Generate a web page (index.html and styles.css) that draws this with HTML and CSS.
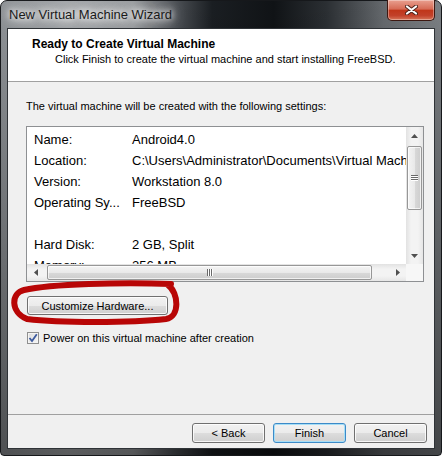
FILE: index.html
```html
<!DOCTYPE html>
<html lang="en">
<head>
    <meta charset="UTF-8">
    <meta name="viewport" content="width=device-width, initial-scale=1.0">
    <title>New Virtual Machine Wizard</title>
    <link rel="stylesheet" href="styles.css">
</head>
<body>
    <div class="window">
        <div class="titlebar">
            <span class="title">New Virtual Machine Wizard</span>
            <span class="close">
                <svg width="13" height="10" viewBox="0 0 13 10">
                    <path d="M2 1.5 L11 8.5 M11 1.5 L2 8.5" stroke="#4b2219" stroke-width="4" stroke-linecap="round"/>
                    <path d="M2 1.5 L11 8.5 M11 1.5 L2 8.5" stroke="#fff" stroke-width="2.2" stroke-linecap="round"/>
                </svg>
            </span>
        </div>

        <div class="client">
            <div class="header">
                <div class="head-title">Ready to Create Virtual Machine</div>
                <div class="head-sub">Click Finish to create the virtual machine and start installing FreeBSD.</div>
            </div>

            <div class="content">
                <p class="intro">The virtual machine will be created with the following settings:</p>

                <div class="listbox">
                    <div class="list-view">
                        <div class="row"><span class="key">Name:</span><span class="val">Android4.0</span></div>
                        <div class="row"><span class="key">Location:</span><span class="val">C:\Users\Administrator\Documents\Virtual Machines\Android4.0</span></div>
                        <div class="row"><span class="key">Version:</span><span class="val">Workstation 8.0</span></div>
                        <div class="row"><span class="key">Operating Sy...</span><span class="val">FreeBSD</span></div>
                        <div class="row"></div>
                        <div class="row"><span class="key">Hard Disk:</span><span class="val">2 GB, Split</span></div>
                        <div class="row"><span class="key">Memory:</span><span class="val">256 MB</span></div>
                    </div>
                    <div class="vscroll">
                        <div class="arrow">
                            <svg width="7" height="4" viewBox="0 0 7 4"><polygon points="0,4 3.5,0 7,4" fill="#505050"/></svg>
                        </div>
                        <div class="vthumb">
                            <svg width="7" height="6" viewBox="0 0 7 6">
                                <rect y="0" width="7" height="1" fill="#6a6a6a"/><rect y="1" width="7" height="1" fill="#fff"/>
                                <rect y="2" width="7" height="1" fill="#6a6a6a"/><rect y="3" width="7" height="1" fill="#fff"/>
                                <rect y="4" width="7" height="1" fill="#6a6a6a"/><rect y="5" width="7" height="1" fill="#fff"/>
                            </svg>
                        </div>
                        <div class="track"></div>
                        <div class="arrow">
                            <svg width="7" height="4" viewBox="0 0 7 4"><polygon points="0,0 7,0 3.5,4" fill="#505050"/></svg>
                        </div>
                    </div>
                    <div class="hscroll">
                        <div class="arrow">
                            <svg width="4" height="7" viewBox="0 0 4 7"><polygon points="4,0 4,7 0,3.5" fill="#505050"/></svg>
                        </div>
                        <div class="hthumb">
                            <svg width="6" height="7" viewBox="0 0 6 7">
                                <rect x="0" width="1" height="7" fill="#6a6a6a"/><rect x="1" width="1" height="7" fill="#fff"/>
                                <rect x="2" width="1" height="7" fill="#6a6a6a"/><rect x="3" width="1" height="7" fill="#fff"/>
                                <rect x="4" width="1" height="7" fill="#6a6a6a"/><rect x="5" width="1" height="7" fill="#fff"/>
                            </svg>
                        </div>
                        <div class="track"></div>
                        <div class="arrow">
                            <svg width="4" height="7" viewBox="0 0 4 7"><polygon points="0,0 4,3.5 0,7" fill="#505050"/></svg>
                        </div>
                    </div>
                    <div class="corner"></div>
                </div>

                <button class="btn customize">Customize Hardware...</button>

                <label class="check">
                    <span class="box">
                        <svg width="10" height="10" viewBox="0 0 10 10">
                            <path d="M1.5 5 L4 8 L8.8 1.2" fill="none" stroke="#3d5a9e" stroke-width="1.8"/>
                        </svg>
                    </span>
                    Power on this virtual machine after creation
                </label>

                <!-- hand drawn marker round the button -->
                <svg class="marker" width="180" height="44" viewBox="0 0 180 44">
                    <path d="M160 2 C110 0, 40 2, 13 8 C0 11, -1 30, 16 37 C48 41, 120 41, 155 37 C169 35, 168 11, 157 3"
                          fill="none" stroke="#b80606" stroke-width="6" stroke-linecap="round"/>
                </svg>
            </div>

            <div class="footer">
                <button class="btn">&lt; Back</button>
                <button class="btn default">Finish</button>
                <button class="btn">Cancel</button>
            </div>
        </div>
    </div>
</body>
</html>
```

FILE: styles.css
```css
body {
    margin: 0;
    font-family: "Liberation Sans", Arial, sans-serif;
    font-size: 11px;
    color: #000;
    background: #fff;
}
.window {
    width: 442px;
    height: 456px;
    box-sizing: border-box;
    border: 1px solid #16181b;
    border-radius: 7px 7px 4px 4px;
    padding: 0 7px 7px;
    display: flex;
    flex-direction: column;
    background:
        linear-gradient(180deg, rgba(0,0,0,0) 0, rgba(0,0,0,0.45) 100%),
        linear-gradient(90deg, #8e9296 0, #a4a7aa 15%, #9a9da0 30%, #4a4e53 40%, #1a1e22 48%, #101316 62%, #2b2f33 74%, #65696d 87%, #7b7f83 100%);
}
.titlebar {
    height: 28px;
    display: flex;
    justify-content: space-between;
    align-items: flex-start;
}
.title {
    margin-left: 1px;
    padding-top: 6px;
    font-size: 13px;
    line-height: 16px;
    color: #1a1a1a;
    text-shadow: 0 0 6px #fff, 0 0 10px #fff, 0 0 16px rgba(255,255,255,0.9);
}
.close {
    margin-top: -1px;
    margin-right: -1px;
    width: 48px;
    height: 21px;
    box-sizing: border-box;
    border: 1px solid #3d1811;
    border-top: none;
    border-radius: 0 0 5px 5px;
    background: linear-gradient(#e9a090 0, #d66b55 45%, #c0361a 52%, #c2412a 78%, #d7765a 100%);
    box-shadow: inset 0 0 0 1px rgba(255,255,255,0.35);
    display: flex;
    align-items: center;
    justify-content: center;
}
.client {
    flex: 1;
    display: flex;
    flex-direction: column;
    background: #f0f0f0;
    box-shadow: 0 0 0 1px #2f3337;
}
.header {
    height: 53px;
    box-sizing: border-box;
    background: #fff;
    border-bottom: 1px solid #a0a0a0;
    padding: 8px 0 0 24px;
}
.head-title {
    font-size: 12px;
    font-weight: bold;
    line-height: 15px;
}
.head-sub {
    padding-left: 23px;
    line-height: 15px;
}
.content {
    flex: 1;
    position: relative;
    padding-left: 18px;
}
.intro {
    margin: 17px 0 0;
    line-height: 15px;
}
.listbox {
    margin-top: 12px;
    width: 398px;
    height: 156px;
    box-sizing: border-box;
    border: 1px solid #8e9093;
    background: #fff;
    display: grid;
    grid-template-columns: 1fr 17px;
    grid-template-rows: 1fr 17px;
}
.list-view {
    overflow: hidden;
    padding: 2px 0 0 7px;
    font-size: 13px;
}
.row {
    height: 21px;
    line-height: 21px;
    display: flex;
    white-space: nowrap;
}
.key {
    width: 98px;
    flex: none;
}
.vscroll {
    display: flex;
    flex-direction: column;
    background: linear-gradient(90deg, #e2e2e2 0, #f3f3f3 30%, #f3f3f3 70%, #e6e6e6 100%);
}
.hscroll {
    display: flex;
    background: linear-gradient(180deg, #e2e2e2 0, #f3f3f3 30%, #f3f3f3 70%, #e6e6e6 100%);
}
.arrow {
    flex: none;
    width: 17px;
    height: 17px;
    display: flex;
    align-items: center;
    justify-content: center;
}
.track {
    flex: 1;
}
.vthumb {
    margin: 2px 1px 0;
    height: 64px;
    box-sizing: border-box;
    border: 1px solid #979797;
    border-radius: 2px;
    background: linear-gradient(90deg, #f4f4f4 0, #e9e9e9 50%, #d9d9d9 51%, #cdcdcd 100%);
    box-shadow: inset 0 0 0 1px rgba(255,255,255,0.7);
    display: flex;
    align-items: center;
    justify-content: center;
}
.hthumb {
    margin: 1px 0 1px 3px;
    width: 325px;
    box-sizing: border-box;
    border: 1px solid #979797;
    border-radius: 2px;
    background: linear-gradient(180deg, #f4f4f4 0, #e9e9e9 50%, #d9d9d9 51%, #cdcdcd 100%);
    box-shadow: inset 0 0 0 1px rgba(255,255,255,0.7);
    display: flex;
    align-items: center;
    justify-content: center;
}
.corner {
    background: #f7f7f7;
}
.btn {
    font-family: "Liberation Sans", Arial, sans-serif;
    font-size: 11px;
    color: #000;
    height: 20px;
    width: 73px;
    padding: 0;
    border: 1px solid #707070;
    border-radius: 3px;
    background: linear-gradient(#f2f2f2 0, #ebebeb 50%, #dddddd 51%, #cfcfcf 100%);
    box-shadow: inset 0 0 0 1px rgba(255,255,255,0.8);
}
.btn.default {
    border-color: #3c8ac8;
    box-shadow: inset 0 0 0 1px #a6def6;
}
.customize {
    display: block;
    margin: 14px 0 0 1px;
    width: 141px;
    height: 19px;
}
.check {
    display: flex;
    align-items: center;
    margin: 17px 0 0 1px;
    height: 12px;
    line-height: 12px;
}
.box {
    width: 12px;
    height: 12px;
    box-sizing: border-box;
    border: 1px solid #8f8f8f;
    background: linear-gradient(135deg, #dcdcdc 0, #f6f6f6 100%);
    box-shadow: inset 0 0 0 1px #f4f4f4;
    margin-right: 4px;
    display: flex;
    align-items: center;
    justify-content: center;
}
.marker {
    position: absolute;
    left: 3px;
    top: 200px;
    overflow: visible;
}
.footer {
    border-top: 1px solid #a0a0a0;
    padding: 8px 7px 5px;
    display: flex;
    justify-content: flex-end;
    gap: 8px;
}
```
